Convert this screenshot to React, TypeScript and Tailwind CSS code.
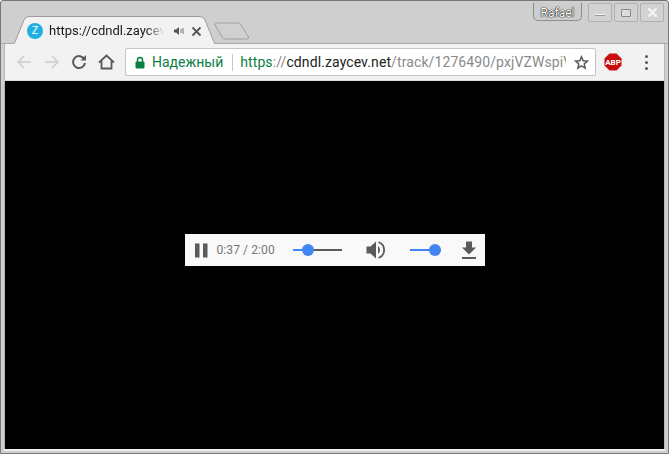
import React from "react";

function TabShape() {
  return (
    <svg className="absolute left-[5px] top-[15px]" width="212" height="30" viewBox="0 0 212 30">
      <path d="M0 29.5 H5 Q7.5 29.5 9 26 L18 4 Q19.5 0.5 23 0.5 H194 Q197.5 0.5 199 4 L208 26 Q209.5 29.5 212 29.5" fill="#f2f2f2" stroke="#9c9c9c" strokeWidth="1" />
    </svg>
  );
}

function Ctrl({ children }: { children: React.ReactNode }) {
  return (
    <div className="w-[24px] h-[19px] rounded-[2px] border border-[#b0b0b0] bg-[#d2d2d2] flex items-center justify-center">
      {children}
    </div>
  );
}

export default function App() {
  return (
    <div className="w-[669px] h-[454px] overflow-hidden bg-[#cfcfcf] border border-[#777777] rounded-t-[3px] flex flex-col font-['Roboto',sans-serif] relative">
      <div className="h-[43px] shrink-0 relative flex border-b border-[#a8a8a8]">
        <TabShape />
        <svg className="absolute left-[213px] top-[21px]" width="36" height="18" viewBox="0 0 36 18">
          <path d="M1.5 1 H24 Q26 1 27 3 L34.500 15 Q35 17 33 17 H11 Q9 17 8 15 L1 3 Q0.500 1 1.500 1 Z" fill="#d0d0d0" stroke="#a0a0a0" />
        </svg>
        <div className="absolute left-[26px] top-[21px] w-[186px] h-[18px] flex items-center">
          <div className="w-[16px] h-[16px] rounded-full bg-[#1fb0e2] text-white text-[11px] leading-[16px] text-center shrink-0">Z</div>
          <div className="ml-[6px] w-[115px] text-[13px] text-[#1a1a1a] whitespace-nowrap overflow-hidden [mask-image:linear-gradient(to_right,black_85%,transparent)]">https://cdndl.zaycev.net/track</div>
          <svg className="ml-[9px]" width="12" height="12" viewBox="0 0 12 12">
            <path d="M1 4.500 H3 L6 2 V10 L3 7.500 H1 Z" fill="#555555" />
            <path d="M8 4 V8 M10 3 V9" stroke="#888888" strokeWidth="1.200" />
          </svg>
          <svg className="ml-[6px]" width="11" height="11" viewBox="0 0 11 11">
            <path d="M1.500 1.500 L9.500 9.500 M9.500 1.500 L1.500 9.500" stroke="#555555" strokeWidth="1.800" />
          </svg>
        </div>
        <div className="ml-auto mt-[2px] mr-[4px] flex items-start gap-[2px]">
          <div className="w-[49px] h-[18px] ml-[1px] mr-[4px] pt-[2px] border-x border-b border-[#8e8e8e] rounded-b-[5px] bg-[#cdcdcd] flex items-center justify-center text-[12px] text-white [text-shadow:0_0_1px_#111,0_0_1px_#111,0_0_1px_#111]">
            Rafael
          </div>
          <Ctrl>
            <div className="w-[10px] h-[2px] mt-[4px] bg-[#f2f2f2] border-b border-[#999999]"></div>
          </Ctrl>
          <Ctrl>
            <div className="w-[10px] h-[8px] rounded-[1px] border border-[#888888] bg-[#dddddd]"></div>
          </Ctrl>
          <Ctrl>
            <svg width="11" height="11" viewBox="0 0 11 11">
              <path d="M1.500 1.500 L9.500 9.500 M9.500 1.500 L1.500 9.500" stroke="#f5f5f5" strokeWidth="2.200" />
            </svg>
          </Ctrl>
        </div>
      </div>

      <div className="h-[36px] shrink-0 mx-[3px] bg-[#f2f2f2] border-x border-[#b5b5b5] flex items-center relative">
        <svg className="ml-[11px]" width="16" height="16" viewBox="0 0 16 16" fill="none">
          <path d="M15 8 H2 M8 2 L2 8 L8 14" stroke="#d4d4d4" strokeWidth="1.800" />
        </svg>
        <svg className="ml-[12px]" width="16" height="16" viewBox="0 0 16 16" fill="none">
          <path d="M1 8 H14 M8 2 L14 8 L8 14" stroke="#d4d4d4" strokeWidth="1.800" />
        </svg>
        <svg className="ml-[11px]" width="16" height="16" viewBox="0 0 16 16" fill="none">
          <path d="M13.500 5.500 A6 6 0 1 0 14 9" stroke="#5a5a5a" strokeWidth="2" />
          <path d="M9.500 6.500 H15 V1 Z" fill="#5a5a5a" />
        </svg>
        <svg className="ml-[11px]" width="17" height="16" viewBox="0 0 17 16" fill="none">
          <path d="M1 8.500 L8.500 1.500 L16 8.500 M3.500 7 V14.500 H13.500 V7 M7 14.500" stroke="#5a5a5a" strokeWidth="1.800" />
        </svg>
        <div className="ml-[10px] w-[471px] h-[28px] rounded-[2px] bg-white border border-[#c4c4c4] flex items-center text-[14px] whitespace-nowrap">
          <svg className="ml-[9px] shrink-0" width="10" height="13" viewBox="0 0 10 13" fill="none">
            <path d="M2.500 6 V4 A2.500 2.500 0 0 1 7.500 4 V6" stroke="#0b8043" strokeWidth="1.500" />
            <rect x="0.500" y="5.500" width="9" height="7" rx="1" fill="#0b8043" />
          </svg>
          <span className="ml-[7px] text-[#0b8043]">Надежный</span>
          <div className="ml-[9px] w-px h-[17px] bg-[#c8c8c8] shrink-0"></div>
          <div className="ml-[7px] w-[326px] shrink-0 overflow-hidden tracking-[0.1px]">
            <span className="text-[#0b8043]">https</span>
            <span className="text-[#8a8a8a]">://</span>
            <span className="text-[#222222]">cdndl.zaycev.net</span>
            <span className="text-[#8a8a8a]">/track/1276490/pxjVZWspiVk</span>
          </div>
          <svg className="ml-[8px] shrink-0" width="15" height="15" viewBox="0 0 24 24" fill="none">
            <path d="M12 3 L14.700 9.300 L21.500 9.900 L16.300 14.400 L17.900 21 L12 17.500 L6.100 21 L7.700 14.400 L2.500 9.900 L9.300 9.300 Z" stroke="#5a5a5a" strokeWidth="2.400" />
          </svg>
        </div>
        <svg className="ml-[8px]" width="18" height="18" viewBox="0 0 18 18">
          <path d="M5.500 0.500 H12.500 L17.500 5.500 V12.500 L12.500 17.500 H5.500 L0.500 12.500 V5.500 Z" fill="#c70d0d" />
          <text x="9" y="12" textAnchor="middle" fontSize="8" fontWeight="700" fontFamily="Roboto" fill="#ffffff">ABP</text>
        </svg>
        <div className="ml-[23px] flex flex-col gap-[3px]">
          <div className="w-[3px] h-[3px] rounded-full bg-[#5a5a5a]"></div>
          <div className="w-[3px] h-[3px] rounded-full bg-[#5a5a5a]"></div>
          <div className="w-[3px] h-[3px] rounded-full bg-[#5a5a5a]"></div>
        </div>
      </div>

      <div className="mx-[3px] h-[369px] shrink-0 border-x border-t border-[#b5b5b5] border-t-[#d8d8d8] bg-black flex flex-col items-center pt-[153px]">
        <div className="w-[300px] h-[32px] bg-[#f9f9f9] flex items-center text-[#5a5a5a]">
          <svg className="ml-[10px] shrink-0" width="13" height="15" viewBox="0 0 13 15">
            <rect x="0" y="0.500" width="4.500" height="14" fill="#5a5a5a" />
            <rect x="8" y="0.500" width="4.500" height="14" fill="#5a5a5a" />
          </svg>
          <span className="ml-[9px] w-[75px] shrink-0 text-[12px] text-[#777777] whitespace-nowrap tracking-[0.1px]">0:37 / 2:00</span>
          <div className="ml-[1px] w-[49px] h-[2px] bg-[#5a5a5a] relative shrink-0">
            <div className="absolute left-0 top-0 h-[2px] w-[15px] bg-[#4285f4]"></div>
            <div className="absolute left-[9px] top-[-5px] w-[12px] h-[12px] rounded-full bg-[#4285f4]"></div>
          </div>
          <svg className="ml-[24px] shrink-0" width="20" height="20" viewBox="0 0 20 20">
            <path d="M0.500 6.500 H4.500 L10 1.500 V18.500 L4.500 13.500 H0.500 Z" fill="#5a5a5a" />
            <path d="M12 6 A5 5 0 0 1 12 14 Z" fill="#5a5a5a" />
            <path d="M12.500 2 A8.500 8.500 0 0 1 12.500 18" fill="none" stroke="#5a5a5a" strokeWidth="1.800" />
          </svg>
          <div className="ml-[24px] w-[31px] h-[2px] bg-[#4285f4] relative shrink-0">
            <div className="absolute right-0 top-[-5px] w-[12px] h-[12px] rounded-full bg-[#4285f4]"></div>
          </div>
          <svg className="ml-[20px] shrink-0" width="16" height="19" viewBox="0 0 16 19">
            <path d="M5 0.500 H11 V6.500 H15 L8 13.500 L1 6.500 H5 Z" fill="#5a5a5a" />
            <rect x="1" y="16" width="14" height="2" fill="#5a5a5a" />
          </svg>
        </div>
      </div>
      <div className="mx-[3px] h-[2px] bg-[#eeeeee]"></div>
    </div>
  );
}
